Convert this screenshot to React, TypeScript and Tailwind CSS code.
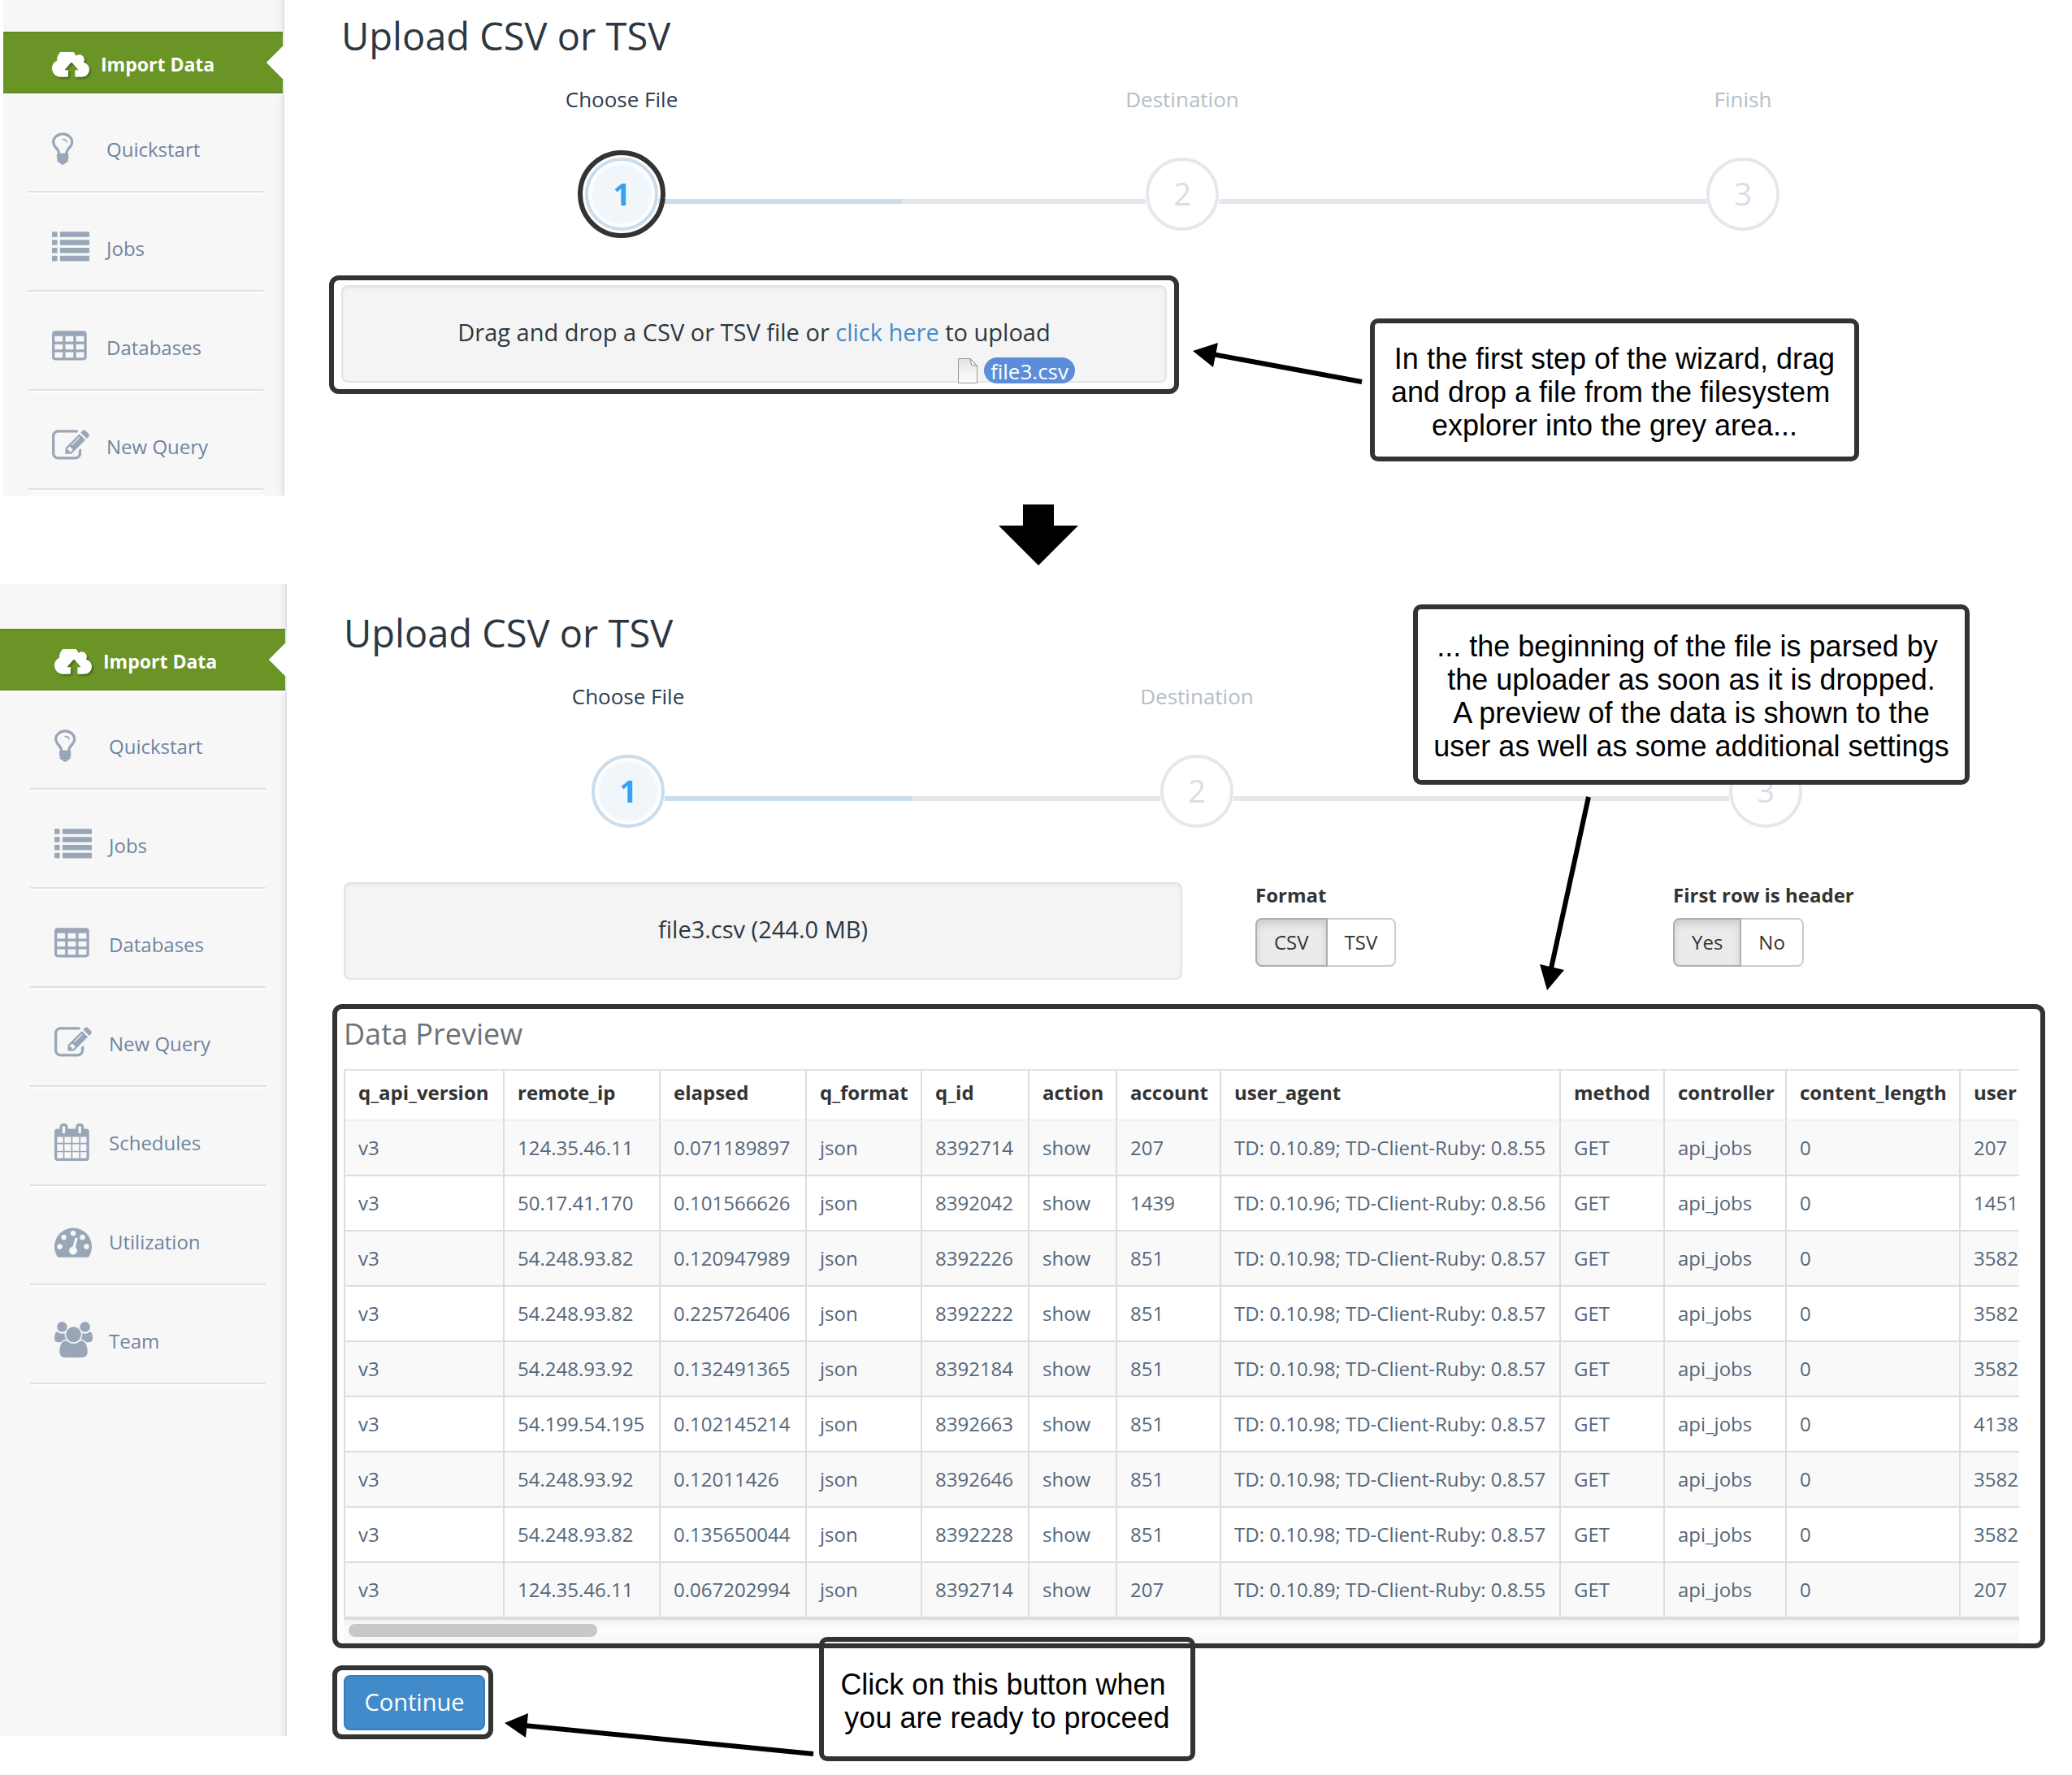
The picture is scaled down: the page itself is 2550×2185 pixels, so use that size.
import { useState } from "react";
import type { ReactNode } from "react";

const ICON_PATHS: Record<string, string> = {
  edit: "M888 1184l116-116-152-152-116 116v56h96v96h56zm440-720q-16-16-33 1l-350 350q-17 17-1 33t33-1l350-350q17-17 1-33zm80 594v190q0 119-84.5 203.5t-203.5 84.5h-832q-119 0-203.5-84.5t-84.5-203.5v-832q0-119 84.5-203.5t203.5-84.5h832q63 0 117 25 15 7 18 23 3 17-9 29l-49 49q-14 14-32 8-23-6-45-6h-832q-66 0-113 47t-47 113v832q0 66 47 113t113 47h832q66 0 113-47t47-113v-126q0-13 9-22l64-64q15-15 35-7t20 29zm-96-738l288 288-672 672h-288v-288zm444 132l-92 92-288-288 92-92q28-28 68-28t68 28l152 152q28 28 28 68t-28 68z",
  gauge: "M384 1152q0-53-37.5-90.5t-90.5-37.5-90.5 37.5-37.5 90.5 37.5 90.5 90.5 37.5 90.5-37.5 37.5-90.5zm192-448q0-53-37.5-90.5t-90.5-37.5-90.5 37.5-37.5 90.5 37.5 90.5 90.5 37.5 90.5-37.5 37.5-90.5zm428 481l101-382q6-26-7.5-48.5t-38.5-29.5-48 6.5-30 39.5l-101 382q-60 5-107 43.5t-63 98.5q-20 77 20 146t117 89 146-20 89-117q16-60-6-117t-72-91zm660-33q0-53-37.5-90.5t-90.5-37.5-90.5 37.5-37.5 90.5 37.5 90.5 90.5 37.5 90.5-37.5 37.5-90.5zm-640-640q0-53-37.5-90.5t-90.5-37.5-90.5 37.5-37.5 90.5 37.5 90.5 90.5 37.5 90.5-37.5 37.5-90.5zm448 192q0-53-37.5-90.5t-90.5-37.5-90.5 37.5-37.5 90.5 37.5 90.5 90.5 37.5 90.5-37.5 37.5-90.5zm320 448q0 261-141 483-19 29-54 29h-1402q-35 0-54-29-141-221-141-483 0-182 71-348t191-286 286-191 348-71 348 71 286 191 191 286 71 348z",
  calendar: "M192 1664h288v-288h-288v288zm352 0h320v-288h-320v288zm-352-352h288v-320h-288v320zm352 0h320v-320h-320v320zm-352-384h288v-288h-288v288zm736 736h320v-288h-320v288zm-384-736h320v-288h-320v288zm768 736h288v-288h-288v288zm-384-352h320v-320h-320v320zm-352-864v-288q0-13-9.5-22.5t-22.5-9.5h-64q-13 0-22.5 9.5t-9.5 22.5v288q0 13 9.5 22.5t22.5 9.5h64q13 0 22.5-9.5t9.5-22.5zm736 864h288v-320h-288v320zm-384-384h320v-288h-320v288zm384 0h288v-288h-288v288zm32-480v-288q0-13-9.5-22.5t-22.5-9.5h-64q-13 0-22.5 9.5t-9.5 22.5v288q0 13 9.5 22.5t22.5 9.5h64q13 0 22.5-9.5t9.5-22.5zm384-64v1280q0 52-38 90t-90 38h-1408q-52 0-90-38t-38-90v-1280q0-52 38-90t90-38h128v-96q0-66 47-113t113-47h64q66 0 113 47t47 113v96h384v-96q0-66 47-113t113-47h64q66 0 113 47t47 113v96h128q52 0 90 38t38 90z",
  users: "M657 896q-162 5-265 128h-134q-82 0-138-40.5t-56-118.5q0-353 124-353 6 0 43.5 21t97.5 42.5 119 21.5q67 0 133-23-5 37-5 66 0 139 81 256zm1071 637q0 120-73 189.5t-194 69.5h-874q-121 0-194-69.5t-73-189.5q0-53 3.5-103.5t14-109 26.5-108.5 43-97.5 62-81 85.5-53.5 111.5-20q10 0 43 21.5t73 48 107 48 135 21.5 135-21.5 107-48 73-48 43-21.5q61 0 111.5 20t85.5 53.5 62 81 43 97.5 26.5 108.5 14 109 3.5 103.5zm-1024-1277q0 106-75 181t-181 75-181-75-75-181 75-181 181-75 181 75 75 181zm704 384q0 159-112.5 271.5t-271.5 112.5-271.5-112.5-112.5-271.5 112.5-271.5 271.5-112.5 271.5 112.5 112.5 271.5zm576 225q0 78-56 118.5t-138 40.5h-134q-103-123-265-128 81-117 81-256 0-29-5-66 66 23 133 23 59 0 119-21.5t97.5-42.5 43.5-21q124 0 124 353zm-128-609q0 106-75 181t-181 75-181-75-75-181 75-181 181-75 181 75 75 181z",
  bulb: "M1120 576q0 13-9.5 22.5t-22.5 9.5-22.5-9.5-9.5-22.5q0-46-54-71t-106-25q-13 0-22.5-9.5t-9.5-22.5 9.5-22.5 22.5-9.5q50 0 99.5 16t87 54 37.5 90zm160 0q0-72-34.5-134t-90-101.5-123-62-136.5-22.5-136.5 22.5-123 62-90 101.5-34.5 134q0 101 68 180 10 11 30.5 33t30.5 33q128 153 141 298h228q13-145 141-298 10-11 30.5-33t30.5-33q68-79 68-180zm128 0q0 155-103 268-45 49-74.5 87t-59.5 95.5-34 107.5q47 28 47 82 0 37-25 64 25 27 25 64 0 52-45 81 13 23 13 47 0 46-31.5 71t-77.5 25q-20 44-60 70t-87 26-87-26-60-70q-46 0-77.5-25t-31.5-71q0-24 13-47-45-29-45-81 0-37 25-64-25-27-25-64 0-54 47-82-4-50-34-107.5t-59.5-95.5-74.5-87q-103-113-103-268 0-99 44.5-184.5t117-142 164-89 186.5-32.5 186.5 32.5 164 89 117 142 44.5 184.5z",
};

function NavIcon({ name }: { name: string }) {
  if (name === "list") {
    return (
      <svg viewBox="0 0 1792 1792" className="h-[46px] w-[46px]" fill="currentColor" aria-hidden="true">
        {[128, 512, 896, 1280].map((y) => (
          <g key={y}>
            <rect x="0" y={y} width="256" height="256" rx="32" />
            <rect x="384" y={y} width="1408" height="256" rx="32" />
          </g>
        ))}
      </svg>
    );
  }
  if (name === "table") {
    return (
      <svg viewBox="0 0 1792 1792" className="h-[46px] w-[46px]" fill="currentColor" aria-hidden="true">
        <path
          fillRule="evenodd"
          d="M160 128h1344q160 0 160 160v1088q0 160-160 160h-1344q-160 0-160-160v-1088q0-160 160-160zM128 384h384v256h-384zM640 384h384v256h-384zM1152 384h384v256h-384zM128 768h384v256h-384zM640 768h384v256h-384zM1152 768h384v256h-384zM128 1152h384v256h-384zM640 1152h384v256h-384zM1152 1152h384v256h-384z"
        />
      </svg>
    );
  }
  if (name === "users") {
    return (
      <svg viewBox="64 0 1920 1792" className="h-[44px] w-[47px]" fill="currentColor" aria-hidden="true">
        <path d={ICON_PATHS.users} />
      </svg>
    );
  }
  const box = name === "bulb" ? "384 0 1792 1792" : name === "calendar" ? "64 0 1792 1792" : "0 0 1792 1792";
  return (
    <svg viewBox={box} className="h-[46px] w-[46px]" fill="currentColor" aria-hidden="true">
      <path d={ICON_PATHS[name]} />
    </svg>
  );
}

const NAV = [
  { label: "Quickstart", icon: "bulb" },
  { label: "Jobs", icon: "list" },
  { label: "Databases", icon: "table" },
  { label: "New Query", icon: "edit" },
  { label: "Schedules", icon: "calendar" },
  { label: "Utilization", icon: "gauge" },
  { label: "Team", icon: "users" },
];

function Sidebar({ count, className, top }: { count: number; className: string; top: string }) {
  return (
    <nav
      className={
        "flex shrink-0 flex-col items-end border-r-2 border-[#dae2ea] bg-[#f7f7f7] shadow-[inset_-8px_0_8px_-6px_rgba(0,0,0,0.06)] " +
        className
      }
    >
      <div className={"w-full shrink-0 " + top} />
      <a
        href="#import"
        className="relative flex h-[76px] w-full shrink-0 items-center justify-end border-y-2 border-[#5f8a20] bg-[#6a9425] text-[23px] leading-[32px] font-bold text-white shadow-[0_2px_4px_#ffffff]"
      >
        <span className="flex w-[284px] items-center gap-[14px] pt-[4px]">
          <svg
            viewBox="-64 256 1920 1280"
            className="h-[31px] w-[46px] drop-shadow-[2px_2px_1px_rgba(0,0,0,0.3)]"
            fill="currentColor"
            aria-hidden="true"
          >
            <path
              fillRule="evenodd"
              d="M1856 1152q0 159-112.5 271.5t-271.5 112.5h-290q-64 0-64-64v-290h130q50 0 22-40l-290-330q-42-46-84 0l-290 330q-28 40 22 40h143v290q0 64-64 64h-323q-185 0-316.5-131.5t-131.5-316.5q0-130 70-240t188-165q-2-30-2-43 0-212 150-362t362-150q156 0 285.5 87t188.5 231q71-62 166-62 106 0 181 75t75 181q0 76-41 138 130 31 213.5 135.5t83.5 238.5z"
            />
          </svg>
          Import Data
        </span>
        <svg viewBox="0 0 24 44" className="absolute top-[14px] -right-[2px] h-[44px] w-[24px]" aria-hidden="true">
          <path d="M24 0L2 22l22 22z" fill="#ffffff" />
          <path d="M24 0L2 22l22 22" fill="none" stroke="#d4dfcf" strokeWidth="1" />
        </svg>
      </a>
      {NAV.slice(0, count).map((item) => (
        <a
          key={item.label}
          href={"#" + item.icon}
          className="mr-[24px] flex h-[122px] w-[290px] shrink-0 items-start border-b-2 border-[#dbe1ea] pl-[30px] text-[24px] leading-[32px] text-[#7084a0] shadow-[0_3px_3px_-1px_#ffffff]"
        >
          <span className="mt-[45px] w-[67px] shrink-0 text-[#99a6b8]">
            <NavIcon name={item.icon} />
          </span>
          <span className="mt-[53px]">{item.label}</span>
        </a>
      ))}
    </nav>
  );
}

const STEPS = ["Choose File", "Destination", "Finish"];

function Stepper({ highlight, lastLabelHidden }: { highlight?: boolean; lastLabelHidden?: boolean }) {
  return (
    <ol className="grid grid-cols-3">
      {STEPS.map((label, i) => (
        <li key={label} className="flex flex-col items-center">
          <span
            className={
              "text-[26px] leading-[36px] " +
              (i === 0 ? "text-[#2b3d53]" : "text-[#b4bec8]") +
              (i === 2 && lastLabelHidden ? " invisible" : "")
            }
          >
            {label}
          </span>
          <div className="mt-[54px] flex w-full items-center">
            <span className={"mt-[18px] h-[6px] flex-1 " + (i === 0 ? "bg-transparent" : "bg-[#e4e8ed]")} />
            <span
              className={
                "relative flex size-[90px] shrink-0 items-center justify-center rounded-full border-4 pb-[2px] text-[38px] leading-[40px] " +
                (i === 0
                  ? "border-[#cadded] bg-[#f1f6fb] font-bold text-[#39a0ee] shadow-[inset_0_0_4px_4px_#ffffff]"
                  : "border-[#e4e8ed] bg-white text-[#d8dde8]")
              }
            >
              {i + 1}
              {i === 0 && highlight && (
                <span className="absolute -inset-[13px] rounded-full border-6 border-[#333333]" />
              )}
            </span>
            <span
              className={
                "mt-[18px] h-[6px] flex-1 " + (i === 0 ? "bg-[#cadded]" : i === 1 ? "bg-[#e4e8ed]" : "bg-transparent")
              }
            />
          </div>
        </li>
      ))}
    </ol>
  );
}

function DropZone({ children }: { children: ReactNode }) {
  return (
    <div className="flex h-[120px] w-full items-center justify-center rounded-[8px] border-2 border-[#e3e3e3] bg-[#f4f4f4] pb-[4px] text-[29px] leading-[36px] text-[#2c3742] shadow-[inset_0_2px_3px_rgba(0,0,0,0.05)]">
      {children}
    </div>
  );
}

function Toggle({ label, options }: { label: string; options: string[] }) {
  const [active, setActive] = useState(options[0]);
  return (
    <div role="group" aria-label={label} className="flex flex-col items-start">
      <span className="text-[24px] leading-[32px] font-bold text-[#333333]">{label}</span>
      <div className="mt-[12px] flex">
        {options.map((option, i) => (
          <button
            key={option}
            type="button"
            aria-pressed={option === active}
            onClick={() => setActive(option)}
            className={
              "h-[60px] border-2 px-[21px] text-[24px] leading-[32px] text-[#333333] " +
              (i === 0 ? "rounded-l-[8px] " : "rounded-r-[8px] border-l-0 ") +
              (option === active
                ? "border-[#adadad] bg-[#ebebeb] shadow-[inset_0_6px_10px_rgba(0,0,0,0.125)]"
                : "border-[#cccccc] bg-white")
            }
          >
            {option}
          </button>
        ))}
      </div>
    </div>
  );
}

const HEADERS = [
  "q_api_version",
  "remote_ip",
  "elapsed",
  "q_format",
  "q_id",
  "action",
  "account",
  "user_agent",
  "method",
  "controller",
  "content_length",
  "user",
];

const ROWS = [
  ["124.35.46.11", "0.071189897", "8392714", "207", "TD: 0.10.89; TD-Client-Ruby: 0.8.55", "207"],
  ["50.17.41.170", "0.101566626", "8392042", "1439", "TD: 0.10.96; TD-Client-Ruby: 0.8.56", "1451"],
  ["54.248.93.82", "0.120947989", "8392226", "851", "TD: 0.10.98; TD-Client-Ruby: 0.8.57", "3582"],
  ["54.248.93.82", "0.225726406", "8392222", "851", "TD: 0.10.98; TD-Client-Ruby: 0.8.57", "3582"],
  ["54.248.93.92", "0.132491365", "8392184", "851", "TD: 0.10.98; TD-Client-Ruby: 0.8.57", "3582"],
  ["54.199.54.195", "0.102145214", "8392663", "851", "TD: 0.10.98; TD-Client-Ruby: 0.8.57", "4138"],
  ["54.248.93.92", "0.12011426", "8392646", "851", "TD: 0.10.98; TD-Client-Ruby: 0.8.57", "3582"],
  ["54.248.93.82", "0.135650044", "8392228", "851", "TD: 0.10.98; TD-Client-Ruby: 0.8.57", "3582"],
  ["124.35.46.11", "0.067202994", "8392714", "207", "TD: 0.10.89; TD-Client-Ruby: 0.8.55", "207"],
].map(([ip, elapsed, id, account, agent, user]) => [
  "v3",
  ip,
  elapsed,
  "json",
  id,
  "show",
  account,
  agent,
  "GET",
  "api_jobs",
  "0",
  user,
]);

function PreviewTable() {
  return (
    <table className="w-full table-fixed border-separate border-spacing-0 border-l-2 border-[#dddddd] text-left text-[24px] leading-[32px] whitespace-nowrap">
      <colgroup>
        <col className="w-[196px]" />
        <col className="w-[192px]" />
        <col className="w-[180px]" />
        <col className="w-[142px]" />
        <col className="w-[132px]" />
        <col className="w-[108px]" />
        <col className="w-[128px]" />
        <col className="w-[418px]" />
        <col className="w-[128px]" />
        <col className="w-[150px]" />
        <col className="w-[214px]" />
        <col />
      </colgroup>
      <thead>
        <tr>
          {HEADERS.map((header) => (
            <th
              key={header}
              scope="col"
              className="h-[64px] overflow-hidden border-t-2 border-r-2 border-b-2 border-t-[#e0e4ea] border-r-[#dddddd] border-b-[#edf2f6] pb-[6px] pl-[16px] font-bold text-[#333333] last:border-r-0"
            >
              {header}
            </th>
          ))}
        </tr>
      </thead>
      <tbody>
        {ROWS.map((row, r) => (
          <tr key={r} className="odd:bg-[#f9f9f9]">
            {row.map((cell, c) => (
              <td
                key={c}
                className="h-[68px] overflow-hidden border-r-2 border-b-2 border-[#dddddd] pl-[16px] text-[#55677a] last:border-r-0"
              >
                {cell}
              </td>
            ))}
          </tr>
        ))}
      </tbody>
    </table>
  );
}

function Callout({ lines, className }: { lines: string[]; className: string }) {
  return (
    <div
      className={
        "absolute flex flex-col items-center justify-center rounded-[10px] border-6 border-[#333333] pt-[4px] font-['Liberation_Sans',Arial,sans-serif] text-[36px] leading-[41px] whitespace-pre text-black " +
        className
      }
    >
      {lines.map((line) => (
        <span key={line}>{line}</span>
      ))}
    </div>
  );
}

function Pointer({ className, box, line, head }: { className: string; box: string; line: string; head: string }) {
  return (
    <svg viewBox={box} className={"absolute overflow-visible " + className} aria-hidden="true">
      <path d={line} stroke="#000000" strokeWidth="6" />
      <path d={head} fill="#000000" />
    </svg>
  );
}

export default function App() {
  return (
    <div className="relative min-w-[2200px] bg-white pb-[44px] font-['Open_Sans','Noto_Sans',sans-serif]">
      <section className="flex h-[610px] overflow-hidden pl-[4px]">
        <Sidebar count={4} className="w-[346px]" top="h-[39px]" />
        <main className="flex-1 pt-[16px] pr-[60px] pl-[70px]">
          <h1 className="text-[47px] leading-[56px] text-[#2c3742]">Upload CSV or TSV</h1>
          <div className="mt-[32px]">
            <Stepper highlight />
          </div>
          <div className="relative mt-[55px] -ml-[15px] w-[1046px] rounded-[12px] border-6 border-[#333333] px-[9px] pt-[6px] pb-[8px]">
            <DropZone>
              <p>
                Drag and drop a CSV or TSV file or{" "}
                <a href="#upload" className="text-[#428bca]">
                  click here
                </a>{" "}
                to upload
              </p>
            </DropZone>
            <div className="absolute right-[122px] bottom-[7px] flex items-center gap-[8px]">
              <svg viewBox="0 0 24 31" className="h-[31px] w-[24px]" aria-hidden="true">
                <defs>
                  <linearGradient id="sheet" x1="0" y1="0" x2="0" y2="1">
                    <stop offset="0" stopColor="#e2e2e2" />
                    <stop offset="1" stopColor="#ffffff" />
                  </linearGradient>
                </defs>
                <path d="M.5.5h14.500l8.500 9v21h-23z" fill="url(#sheet)" stroke="#9a9a9a" />
                <path d="M15 .5l1.500 7.500l7 1.500z" fill="#fafafa" stroke="#8a8a8a" />
              </svg>
              <span className="h-[32px] rounded-full bg-[#5b8dd9] px-[8px] text-[26px] leading-[34px] text-white">
                file3.csv
              </span>
            </div>
          </div>
        </main>
      </section>

      <div className="flex h-[109px] items-start pt-[11px] pl-[1228px]">
        <svg viewBox="0 0 100 76" className="h-[76px] w-[100px]" aria-hidden="true">
          <path d="M31 0h38v26h30L50 75 1 26h30z" fill="#000000" />
        </svg>
      </div>

      <section className="flex">
        <Sidebar count={7} className="mb-[4px] w-[353px]" top="h-[55px]" />
        <main className="flex-1 pt-[32px] pr-[27px] pl-[70px]">
          <h1 className="text-[47px] leading-[56px] text-[#2c3742]">Upload CSV or TSV</h1>
          <div className="mt-[32px]">
            <Stepper lastLabelHidden />
          </div>
          <div className="mt-[67px] flex items-start">
            <div className="w-[1032px] shrink-0">
              <DropZone>file3.csv (244.0 MB)</DropZone>
            </div>
            <div className="ml-[90px] w-[514px] shrink-0">
              <Toggle label="Format" options={["CSV", "TSV"]} />
            </div>
            <Toggle label="First row is header" options={["Yes", "No"]} />
          </div>

          <div className="mt-[30px] mr-[6px] -ml-[14px] rounded-[12px] border-6 border-[#333333] pt-[7px] pr-[26px] pl-[8px]">
            <h2 className="text-[36px] leading-[48px] text-[#6d7278]">Data Preview</h2>
            <div className="mt-[19px] overflow-hidden">
              <PreviewTable />
              <div className="h-[31px] border-t-2 border-[#dddddd] bg-linear-to-b from-[#f1f1f1] via-[#fdfdfd] via-40% to-[#f6f6f6] pt-[5px] pl-[6px]">
                <div className="h-[16px] w-[306px] rounded-full bg-[#c8c8c8]" />
              </div>
            </div>
          </div>

          <div className="mt-[21px] -ml-[14px] w-[198px] rounded-[12px] border-6 border-[#333333] pt-[6px] pr-[4px] pb-[5px] pl-[8px]">
            <button
              type="button"
              className="h-[68px] w-full rounded-[8px] border-2 border-[#357ebd] bg-[#428bca] pb-[2px] text-[29px] leading-[36px] text-white"
            >
              Continue
            </button>
          </div>
        </main>
      </section>

      <Callout
        className="top-[392px] left-[1686px] h-[176px] w-[602px] bg-white"
        lines={["In the first step of the wizard, drag", "and drop a file from the filesystem ", "explorer into the grey area..."]}
      />
      <Callout
        className="top-[744px] left-[1739px] h-[222px] w-[685px] bg-white"
        lines={[
          "... the beginning of the file is parsed by ",
          "the uploader as soon as it is dropped.",
          "A preview of the data is shown to the",
          "user as well as some additional settings",
        ]}
      />
      <Callout
        className="top-[2015px] left-[1008px] h-[153px] w-[463px]"
        lines={["Click on this button when ", "you are ready to proceed"]}
      />
      <Pointer
        className="top-[422px] left-[1468px] h-[52px] w-[210px]"
        box="0 0 210 52"
        line="M208 48L24 14"
        head="M0 10L31 0L25 30z"
      />
      <Pointer
        className="top-[980px] left-[1895px] h-[240px] w-[64px]"
        box="0 0 64 240"
        line="M60 1L14 212"
        head="M9 239L0 207L30 214z"
      />
      <Pointer
        className="top-[2109px] left-[621px] h-[54px] w-[380px]"
        box="0 0 380 54"
        line="M380 50L24 15"
        head="M0 12L29 0L26 30z"
      />
    </div>
  );
}
